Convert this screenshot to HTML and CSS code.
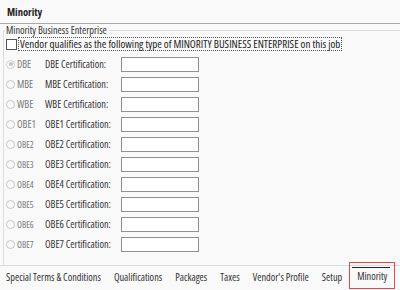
FILE: index.html
```html
<!DOCTYPE html>
<html>
<head>
<meta charset="utf-8">
<link rel="stylesheet" href="styles.css">
</head>
<body>
<div class="page">
  <div class="header">Minority</div>
  <fieldset class="group">
    <legend>Minority Business Enterprise</legend>
    <div class="check-row">
      <span class="checkbox"></span>
      <span class="check-label">Vendor qualifies as the following type of MINORITY BUSINESS ENTERPRISE on this job</span>
    </div>
    <div class="rows">
      <div class="row"><span class="radio checked"></span><span class="code">DBE</span><span class="cert">DBE Certification:</span><span class="input"></span></div>
      <div class="row"><span class="radio"></span><span class="code">MBE</span><span class="cert">MBE Certification:</span><span class="input"></span></div>
      <div class="row"><span class="radio"></span><span class="code">WBE</span><span class="cert">WBE Certification:</span><span class="input"></span></div>
      <div class="row"><span class="radio"></span><span class="code">OBE1</span><span class="cert">OBE1 Certification:</span><span class="input"></span></div>
      <div class="row"><span class="radio"></span><span class="code small">OBE2</span><span class="cert">OBE2 Certification:</span><span class="input"></span></div>
      <div class="row"><span class="radio"></span><span class="code small">OBE3</span><span class="cert">OBE3 Certification:</span><span class="input"></span></div>
      <div class="row"><span class="radio"></span><span class="code small">OBE4</span><span class="cert">OBE4 Certification:</span><span class="input"></span></div>
      <div class="row"><span class="radio"></span><span class="code small">OBE5</span><span class="cert">OBE5 Certification:</span><span class="input"></span></div>
      <div class="row"><span class="radio"></span><span class="code small">OBE6</span><span class="cert">OBE6 Certification:</span><span class="input"></span></div>
      <div class="row"><span class="radio"></span><span class="code small">OBE7</span><span class="cert">OBE7 Certification:</span><span class="input"></span></div>
    </div>
  </fieldset>
  <div class="tabs">
    <span class="tab">Special Terms &amp; Conditions</span>
    <span class="tab">Qualifications</span>
    <span class="tab">Packages</span>
    <span class="tab">Taxes</span>
    <span class="tab">Vendor's Profile</span>
    <span class="tab">Setup</span>
    <span class="tab active">Minority</span>
  </div>
</div>
</body>
</html>
```
FILE: styles.css
```css
html, body {
  margin: 0;
  padding: 0;
  background: #f9f9f9;
}
body {
  font-family: "Open Sans", sans-serif;
  font-stretch: 75%;
  font-size: 10.25px;
  color: #333;
}
.page {
  width: 400px;
  height: 290px;
  display: flex;
  flex-direction: column;
  overflow: hidden;
}
.header {
  height: 23px;
  line-height: 24px;
  padding-left: 7px;
  font-weight: bold;
  font-size: 10.5px;
  color: #222;
  background: #f9f9f9;
  border-bottom: 1px solid #a9a9a9;
}
.group {
  margin: 0 0 0 3px;
  padding: 0 0 0 1px;
  border: 1px solid #dcdcdc;
  border-right: none;
  border-bottom: none;
  flex: 1;
  min-width: 0;
}
.group legend {
  padding: 0 2px 0 1px;
  margin-left: 0;
  color: #333;
  line-height: 12px;
  white-space: nowrap;
}
.check-row {
  display: flex;
  align-items: center;
  height: 14px;
  margin-top: 1px;
}
.checkbox {
  width: 9px;
  height: 9px;
  border: 1px solid #555;
  background: #fff;
  margin-left: 1px;
  margin-right: 1px;
  flex: none;
}
.check-label {
  border: 1px dotted #555;
  padding: 0 1px;
  line-height: 12px;
  font-size: 11px;
  color: #222;
  white-space: nowrap;
}
.rows {
  margin-top: 3px;
  display: flex;
  flex-direction: column;
}
.row {
  height: 20px;
  display: flex;
  align-items: center;
  white-space: nowrap;
}
.radio {
  width: 7px;
  height: 7px;
  border: 1px solid #c4c4c4;
  border-radius: 50%;
  background: #fbfbfb;
  margin-left: 1px;
  box-sizing: content-box;
  position: relative;
  flex: none;
}
.radio.checked {
  border-color: #cfcfcf;
}
.radio.checked::after {
  content: "";
  position: absolute;
  left: 1.5px;
  top: 1.5px;
  width: 4px;
  height: 4px;
  border-radius: 50%;
  background: #c4c4c4;
}
.code {
  width: 28px;
  margin-left: 2px;
  color: #777;
  flex: none;
}
.code.small {
  font-size: 9px;
}
.cert {
  width: 76px;
  color: #333;
  flex: none;
}
.input {
  width: 76px;
  height: 13px;
  border: 1px solid #8f8f8f;
  background: #fff;
  flex: none;
}
.tabs {
  height: 22px;
  border-top: 1px solid #dcdcdc;
  display: flex;
  align-items: center;
  padding-left: 6px;
  gap: 13px;
  color: #333;
  margin-bottom: 2px;
}
.tab {
  white-space: nowrap;
}
.tab.active {
  position: relative;
  padding: 0 7px;
  margin-left: -6px;
  align-self: stretch;
  display: flex;
  align-items: center;
  border: 1px solid #e8454a;
  margin-top: -4px;
  margin-bottom: -1px;
}
.tab.active::before {
  content: "";
  position: absolute;
  left: 2px;
  right: 4px;
  top: 4px;
  height: 1px;
  background: #222;
}
```
